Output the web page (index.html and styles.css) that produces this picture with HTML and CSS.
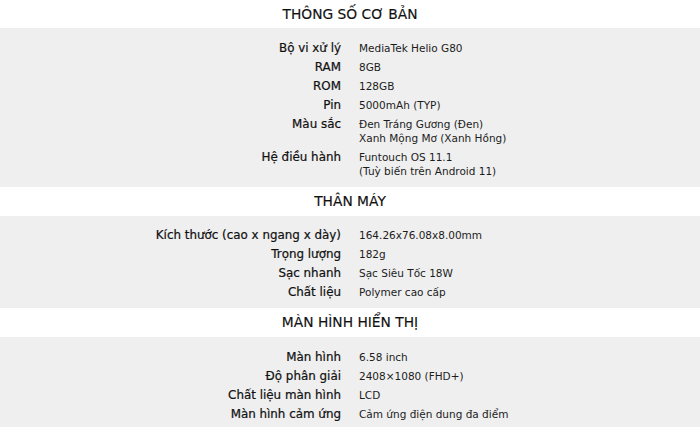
FILE: index.html
```html
<!DOCTYPE html>
<html lang="vi">
<head>
<meta charset="utf-8">
<title>Thông số</title>
<link rel="stylesheet" href="styles.css">
</head>
<body>
<div class="specs">
  <h2 class="title">THÔNG SỐ CƠ BẢN</h2>
  <div class="group">
    <div class="row"><div class="label">Bộ vi xử lý</div><div class="value">MediaTek Helio G80</div></div>
    <div class="row"><div class="label">RAM</div><div class="value">8GB</div></div>
    <div class="row"><div class="label">ROM</div><div class="value">128GB</div></div>
    <div class="row"><div class="label">Pin</div><div class="value">5000mAh (TYP)</div></div>
    <div class="row"><div class="label">Màu sắc</div><div class="value">Đen Tráng Gương (Đen)<br>Xanh Mộng Mơ (Xanh Hồng)</div></div>
    <div class="row"><div class="label">Hệ điều hành</div><div class="value">Funtouch OS 11.1<br>(Tuỳ biến trên Android 11)</div></div>
  </div>
  <h2 class="title">THÂN MÁY</h2>
  <div class="group">
    <div class="row"><div class="label">Kích thước (cao x ngang x dày)</div><div class="value">164.26x76.08x8.00mm</div></div>
    <div class="row"><div class="label">Trọng lượng</div><div class="value">182g</div></div>
    <div class="row"><div class="label">Sạc nhanh</div><div class="value">Sạc Siêu Tốc 18W</div></div>
    <div class="row"><div class="label">Chất liệu</div><div class="value">Polymer cao cấp</div></div>
  </div>
  <h2 class="title">MÀN HÌNH HIỂN THỊ</h2>
  <div class="group">
    <div class="row"><div class="label">Màn hình</div><div class="value">6.58 inch</div></div>
    <div class="row"><div class="label">Độ phân giải</div><div class="value">2408×1080 (FHD+)</div></div>
    <div class="row"><div class="label">Chất liệu màn hình</div><div class="value">LCD</div></div>
    <div class="row"><div class="label">Màn hình cảm ứng</div><div class="value">Cảm ứng điện dung đa điểm</div></div>
  </div>
</div>
</body>
</html>
```

FILE: styles.css
```css
html, body {
  margin: 0;
  padding: 0;
  background: #ffffff;
}
body {
  font-family: "DejaVu Sans", "Noto Sans", sans-serif;
  color: #111111;
}
.specs {
  width: 700px;
}
.title {
  margin: 0;
  height: 29px;
  line-height: 29px;
  text-align: center;
  font-size: 13.8px;
  font-weight: 400;
  -webkit-text-stroke: 0.15px #111111;
  color: #111111;
}
.specs > .title:first-child {
  height: 28px;
  line-height: 28px;
}
.group {
  background: #efefef;
  padding: 10px 0 6.5px;
}
.row {
  display: grid;
  grid-template-columns: 1fr 1fr;
  column-gap: 18px;
  padding: 2.5px 0;
}
.label {
  text-align: right;
  font-size: 11.9px;
  font-weight: 400;
  line-height: 14px;
  -webkit-text-stroke: 0.22px #111111;
  color: #111111;
}
.value {
  font-size: 10.5px;
  line-height: 14px;
  color: #1c1c1c;
}
```
